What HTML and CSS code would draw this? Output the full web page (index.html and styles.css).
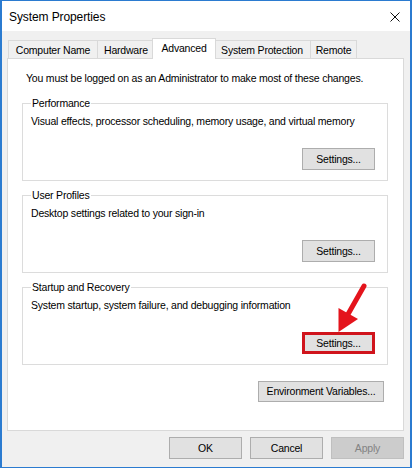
FILE: index.html
```html
<!DOCTYPE html>
<html>
<head>
<meta charset="utf-8">
<link rel="stylesheet" href="styles.css">
</head>
<body>
<div class="window">
  <div class="titlebar">
    <span class="title">System Properties</span>
    <span class="close">
      <svg width="10" height="10" viewBox="0 0 10 10"><path d="M0.5 0.5 L9.5 9.5 M9.5 0.5 L0.5 9.5" stroke="#111" stroke-width="1" fill="none"/></svg>
    </span>
  </div>
  <div class="content">
    <div class="tabs">
      <div class="tab t-cn">Computer Name</div>
      <div class="tab t-hw">Hardware</div>
      <div class="tab t-adv active">Advanced</div>
      <div class="tab t-sp">System Protection</div>
      <div class="tab t-rm">Remote</div>
    </div>
    <div class="panel">
      <p class="intro">You must be logged on as an Administrator to make most of these changes.</p>
      <fieldset class="group">
        <legend>Performance</legend>
        <p class="desc">Visual effects, processor scheduling, memory usage, and virtual memory</p>
        <div class="btnrow"><button class="btn">Settings...</button></div>
      </fieldset>
      <fieldset class="group">
        <legend>User Profiles</legend>
        <p class="desc">Desktop settings related to your sign-in</p>
        <div class="btnrow"><button class="btn">Settings...</button></div>
      </fieldset>
      <fieldset class="group">
        <legend>Startup and Recovery</legend>
        <p class="desc">System startup, system failure, and debugging information</p>
        <div class="btnrow"><button class="btn highlight">Settings...</button></div>
      </fieldset>
      <div class="envrow"><button class="btn env">Environment Variables...</button></div>
    </div>
    <div class="footer">
      <button class="btn foot">OK</button>
      <button class="btn foot">Cancel</button>
      <button class="btn foot disabled">Apply</button>
    </div>
  </div>
  <svg class="arrow" width="412" height="468" viewBox="0 0 412 468">
    <path d="M364 286 L347 316" stroke="#e4141c" stroke-width="5" stroke-linecap="round" fill="none"/>
    <polygon points="338.5,332 338.5,308 358,319" fill="#e4141c"/>
  </svg>
</div>
</body>
</html>
```
FILE: styles.css
```css
* { box-sizing: border-box; }
html, body { margin: 0; padding: 0; background: #fff; }
body {
  font-family: "Liberation Sans", Arial, sans-serif;
  font-size: 10.5px;
  letter-spacing: -0.2px;
  color: #000;
}
.window {
  position: relative;
  width: 412px;
  height: 468px;
  border: 1px solid #2b7bd0;
  border-left-width: 2px;
  border-right-width: 2px;
  background: #f0f0f0;
  display: flex;
  flex-direction: column;
}
.titlebar {
  height: 30px;
  background: #fff;
  display: flex;
  align-items: center;
  justify-content: space-between;
  padding: 0 10px 0 7px;
  flex: none;
}
.title { font-size: 12px; letter-spacing: -0.1px; line-height: 16px; padding-top: 1px; }
.close { display: flex; width: 10px; height: 10px; margin-top: 2px; }
.content {
  flex: 1;
  display: flex;
  flex-direction: column;
  padding: 9px 6px 0 5px;
}
.tabs {
  display: flex;
  align-items: flex-end;
  height: 18px;
  padding-left: 1px;
  position: relative;
  z-index: 2;
}
.tab {
  height: 18px;
  border: 1px solid #d9d9d9;
  border-bottom: none;
  margin-left: -1px;
  background: #f0f0f0;
  display: flex;
  align-items: center;
  justify-content: center;
  line-height: 15px;
  padding-top: 1px;
}
.tab:first-child { margin-left: 0; }
.t-cn { width: 90px; }
.t-hw { width: 58px; }
.t-adv { width: 64px; }
.t-sp { width: 98px; }
.t-rm { width: 47px; }
.tab.active {
  background: #fff;
  height: 21px;
  margin: 0 -2px 0 -3px;
  margin-bottom: -1px;
  padding-bottom: 3px;
  position: relative;
  z-index: 3;
}
.panel {
  background: #fff;
  border: 1px solid #d9d9d9;
  height: 373px;
  padding: 12px 15px 0 14px;
  display: flex;
  flex-direction: column;
}
.intro {
  margin: 0 0 10px 4px;
  line-height: 15px;
  white-space: nowrap;
}
.group {
  margin: 0 0 7px 0;
  border: 1px solid #dcdcdc;
  padding: 3px 12px 10px 8px;
  min-width: 0;
}
.group legend {
  padding: 0 1px;
  margin-left: 0;
  line-height: 15px;
}
.desc {
  margin: 0 0 19px 0;
  line-height: 15px;
  white-space: nowrap;
}
.btnrow { display: flex; justify-content: flex-end; }
.btn {
  font-family: inherit;
  font-size: 10.5px;
  letter-spacing: -0.2px;
  color: #000;
  background: #e1e1e1;
  border: 1px solid #adadad;
  height: 22px;
  padding: 0;
  margin: 0;
  line-height: 15px;
}
.btnrow .btn { width: 73px; }
.btn.highlight {
  border: 3px solid #d0141c;
}
.envrow {
  display: flex;
  justify-content: flex-end;
  padding-right: 4px;
  margin-top: 9px;
}
.btn.env { width: 126px; height: 21px; }
.footer {
  display: flex;
  justify-content: flex-end;
  gap: 8px;
  padding-top: 6px;
  margin-right: 0;
}
.btn.foot { width: 73px; height: 22px; }
.btn.disabled {
  background: #cccccc;
  border-color: #bfbfbf;
  color: #838383;
}
.arrow {
  position: absolute;
  left: -2px;
  top: -1px;
  pointer-events: none;
}
```
